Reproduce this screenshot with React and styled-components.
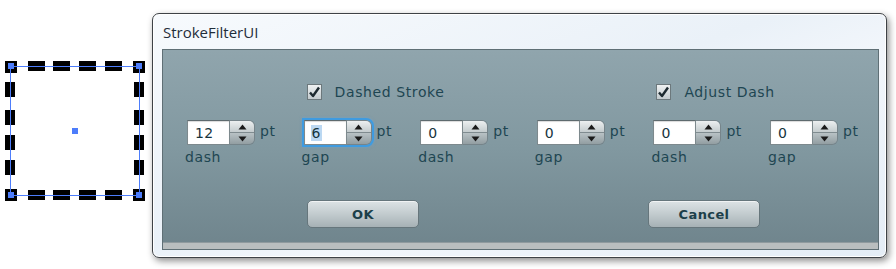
import React from 'react'
import styled, { createGlobalStyle } from 'styled-components'

const GlobalStyle = createGlobalStyle`
  html, body {
    margin: 0;
    padding: 0;
    background: #ffffff;
  }
  body {
    font-family: "DejaVu Sans", Verdana, sans-serif;
  }
`

const Page = styled.div`
  display: flex;
  align-items: flex-start;
  width: 896px;
  height: 269px;
  overflow: hidden;
`

const Figure = styled.svg`
  flex: none;
  display: block;
`

const Window = styled.div`
  flex: none;
  margin-top: 13px;
  width: 735px;
  height: 245px;
  box-sizing: border-box;
  border: 1px solid #3e4246;
  border-radius: 7px;
  background: linear-gradient(160deg, #f7fafd 0%, #eaf1f8 45%, #f2f6fb 60%, #e4edf6 100%);
  box-shadow: inset 0 0 0 1px #ffffff, 2px 3px 7px rgba(0, 0, 0, 0.45);
  display: flex;
  flex-direction: column;
  padding: 0 7px 7px 9px;
`

const TitleBar = styled.div`
  height: 35px;
  display: flex;
  align-items: center;
  padding-left: 1px;
  font-family: "Open Sans", "Liberation Sans", sans-serif;
  font-size: 15px;
  color: #1f2d3a;
`

const Panel = styled.div`
  flex: 1;
  box-sizing: border-box;
  border: 1px solid #5f6f75;
  background: linear-gradient(180deg, #90a5ad 0%, #8198a0 50%, #6f848c 100%);
  display: flex;
  flex-direction: column;
  color: #1e4652;
  font-size: 14px;
  letter-spacing: 0.6px;
`

const Grid = styled.div`
  display: grid;
  grid-template-columns: repeat(6, 116.6px);
  padding-left: 24px;
`

const CheckRow = styled(Grid)`
  margin-top: 34px;
  height: 16px;
`

const CheckItem = styled.label`
  grid-column: ${({ $col }) => $col};
  margin-left: ${({ $shift }) => $shift}px;
  display: flex;
  align-items: center;
  gap: 13px;
  white-space: nowrap;
`

const CheckBox = styled.span`
  width: 16px;
  height: 16px;
  box-sizing: border-box;
  border: 1px solid #6c787c;
  background: linear-gradient(180deg, #eef1f2 0%, #c3cbce 100%);
  display: flex;
  align-items: center;
  justify-content: center;
`

const SpinRow = styled(Grid)`
  margin-top: 20px;
`

const Field = styled.div`
  display: flex;
  flex-direction: column;
  align-items: flex-start;
`

const FieldTop = styled.div`
  display: flex;
  align-items: center;
  gap: 5px;
`

const Spinner = styled.div`
  display: flex;
  height: 25px;
  box-sizing: border-box;
  border-radius: 0 6px 6px 0;
  outline: ${({ $focus }) => ($focus ? '2px solid #3f9be0' : 'none')};
  outline-offset: 0;
  box-shadow: ${({ $focus }) => ($focus ? '0 0 3px 2px rgba(90, 170, 235, 0.5)' : 'none')};
`

const NumInput = styled.div`
  width: 43px;
  box-sizing: border-box;
  background: #ffffff;
  border: 1px solid #7d898d;
  border-top-color: #5e6a6e;
  box-shadow: inset 0 1px 1px rgba(0, 0, 0, 0.15);
  display: flex;
  align-items: center;
  padding-left: 7px;
  font-size: 14px;
  color: #17343d;
  letter-spacing: 0.3px;
`

const Selected = styled.span`
  background: ${({ $on }) => ($on ? '#bcd8f2' : 'transparent')};
  padding: 0 1px;
  margin-left: -1px;
`

const SpinButtons = styled.div`
  width: 25px;
  box-sizing: border-box;
  border: 1px solid #76848a;
  border-left: none;
  border-radius: 0 6px 6px 0;
  overflow: hidden;
  display: flex;
  flex-direction: column;
`

const SpinHalf = styled.div`
  flex: 1;
  display: flex;
  align-items: center;
  justify-content: center;
  background: ${({ $down }) =>
    $down
      ? 'linear-gradient(180deg, #b9c2c5 0%, #929ea2 100%)'
      : 'linear-gradient(180deg, #eceff0 0%, #c4ccce 100%)'};
  border-top: ${({ $down }) => ($down ? '1px solid #7f8b8f' : 'none')};
`

const Unit = styled.span`
  font-size: 14px;
  margin-top: -4px;
`

const FieldLabel = styled.span`
  margin-top: 4px;
  margin-left: -2px;
  line-height: 16px;
`

const ButtonRow = styled.div`
  display: flex;
  margin-top: 35px;
  padding-left: 144px;
  gap: 229px;
`

const Button = styled.div`
  width: 112px;
  height: 28px;
  box-sizing: border-box;
  border: 1px solid #66767c;
  border-radius: 5px;
  background: linear-gradient(180deg, #dde3e5 0%, #c2cbce 50%, #a6b1b5 100%);
  box-shadow: inset 0 1px 0 rgba(255, 255, 255, 0.6);
  display: flex;
  align-items: center;
  justify-content: center;
  font-weight: bold;
  font-size: 13px;
  letter-spacing: 0.4px;
  color: #1c3f4a;
`

const BottomStrip = styled.div`
  margin-top: auto;
  height: 6px;
  background: #b9bebf;
  border-top: 1px solid #8f9a9e;
`

function Arrow({ down }) {
  return (
    <svg width="9" height="6" viewBox="0 0 9 6">
      <path d={down ? 'M0.5 0.5 L8.5 0.5 L4.5 5.5 Z' : 'M0.5 5.5 L8.5 5.5 L4.5 0.5 Z'} fill="#1a1a1a" />
    </svg>
  )
}

function NumberField({ value, label, focus }) {
  return (
    <Field>
      <FieldTop>
        <Spinner $focus={focus}>
          <NumInput>
            <Selected $on={focus}>{value}</Selected>
          </NumInput>
          <SpinButtons>
            <SpinHalf><Arrow /></SpinHalf>
            <SpinHalf $down><Arrow down /></SpinHalf>
          </SpinButtons>
        </Spinner>
        <Unit>pt</Unit>
      </FieldTop>
      <FieldLabel>{label}</FieldLabel>
    </Field>
  )
}

function Check({ col, shift, children }) {
  return (
    <CheckItem $col={col} $shift={shift}>
      <CheckBox>
        <svg width="13" height="13" viewBox="0 0 13 13">
          <path d="M2 6.5 L5 10 L11 1.5" stroke="#1d2a30" strokeWidth="2.4" fill="none" strokeLinejoin="round" />
        </svg>
      </CheckBox>
      {children}
    </CheckItem>
  )
}

function DashedSquare() {
  const across = [18, 43, 69, 95]
  const down = [16, 44, 69, 94]
  const corners = [
    [5, 61], [133, 61], [5, 189], [133, 189],
  ]
  return (
    <Figure width="152" height="269">
      {corners.map(([x, y]) => (
        <rect key={`c${x}-${y}`} x={x} y={y} width="12" height="12" fill="#000" />
      ))}
      {across.map((o) => (
        <g key={`a${o}`}>
          <rect x={10 + o} y="61" width="17" height="10" fill="#000" />
          <rect x={10 + o} y="190" width="17" height="10" fill="#000" />
        </g>
      ))}
      {down.map((o) => (
        <g key={`d${o}`}>
          <rect x="5" y={66 + o} width="10" height="15" fill="#000" />
          <rect x="134" y={66 + o} width="10" height="15" fill="#000" />
        </g>
      ))}
      <rect x="10.5" y="66.5" width="129" height="129" fill="none" stroke="#4d7dfb" strokeWidth="1" />
      {[[8, 63], [136, 63], [8, 192], [136, 192], [72, 128]].map(([x, y]) => (
        <rect key={`h${x}-${y}`} x={x} y={y} width="6" height="6" fill="#4d7dfb" />
      ))}
    </Figure>
  )
}

const fields = [
  { value: '12', label: 'dash' },
  { value: '6', label: 'gap', focus: true },
  { value: '0', label: 'dash' },
  { value: '0', label: 'gap' },
  { value: '0', label: 'dash' },
  { value: '0', label: 'gap' },
]

export default function App() {
  return (
    <>
      <GlobalStyle />
      <Page>
        <DashedSquare />
        <Window>
          <TitleBar>StrokeFilterUI</TitleBar>
          <Panel>
            <CheckRow>
              <Check col={2} shift={3}>Dashed Stroke</Check>
              <Check col={5} shift={3}>Adjust Dash</Check>
            </CheckRow>
            <SpinRow>
              {fields.map((f, i) => (
                <NumberField key={i} value={f.value} label={f.label} focus={f.focus} />
              ))}
            </SpinRow>
            <ButtonRow>
              <Button>OK</Button>
              <Button>Cancel</Button>
            </ButtonRow>
            <BottomStrip />
          </Panel>
        </Window>
      </Page>
    </>
  )
}
